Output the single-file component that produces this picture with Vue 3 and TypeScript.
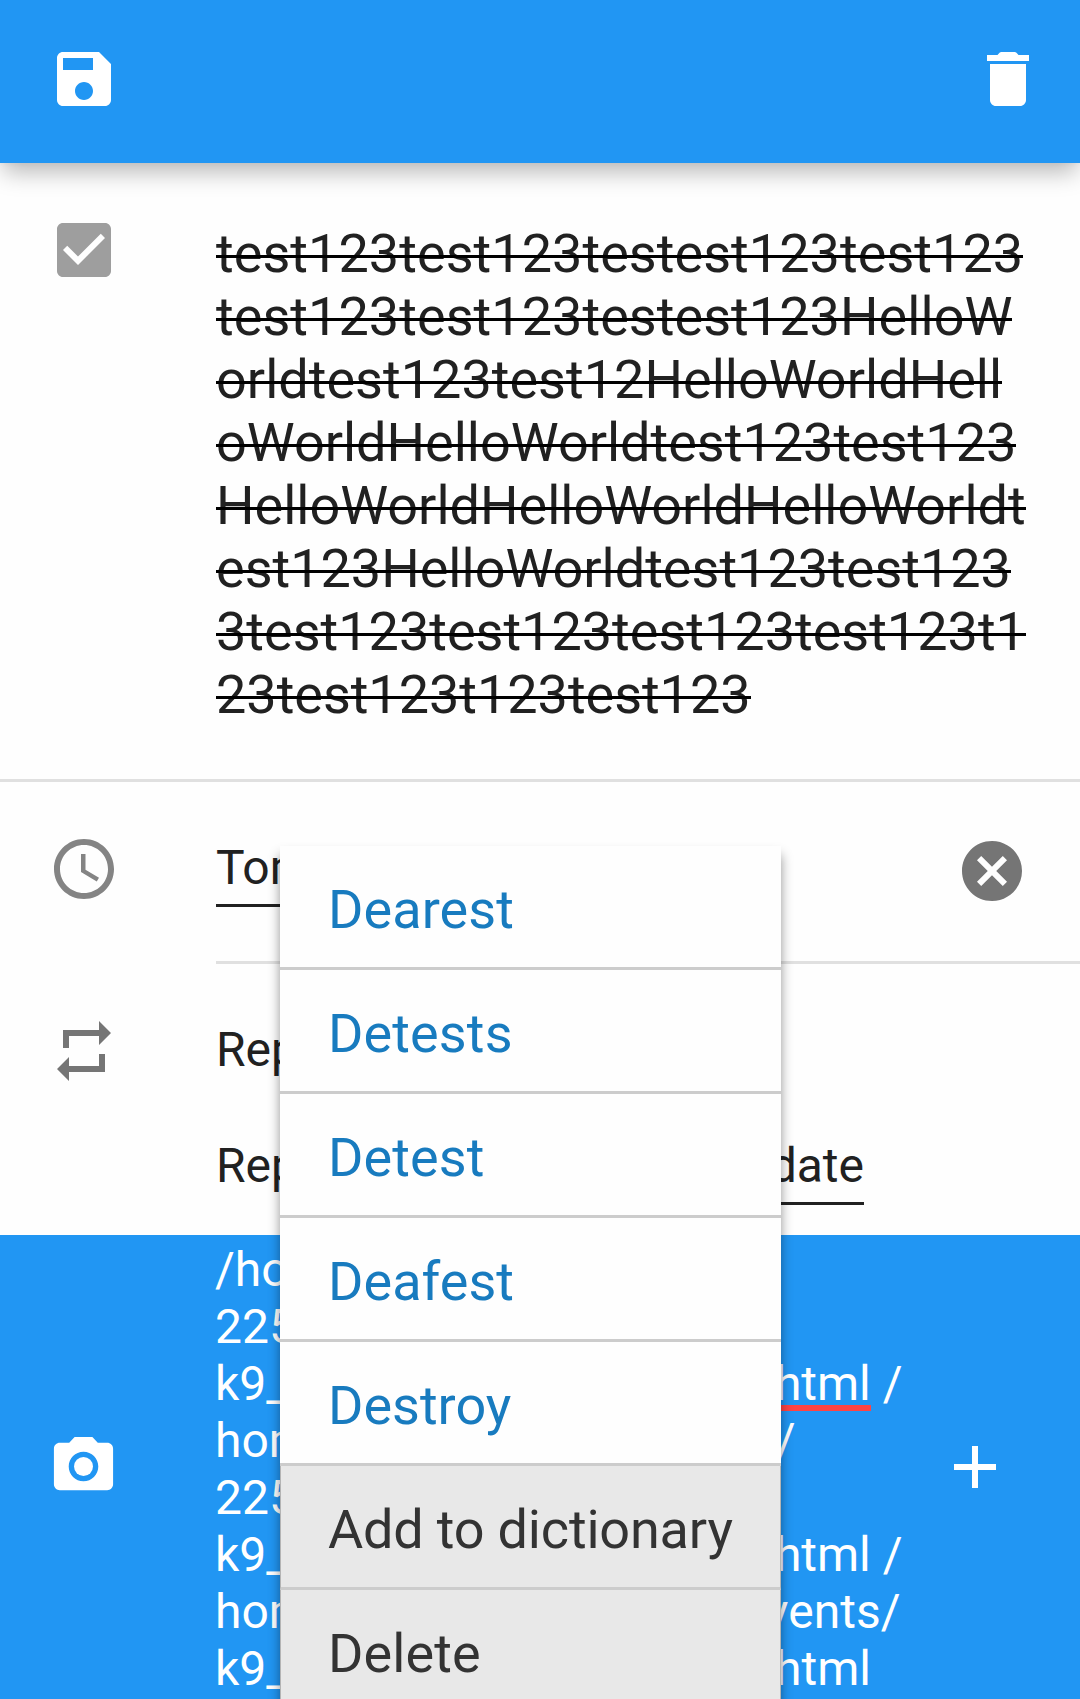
<script setup lang="ts">
interface Label {
  text: string
  spacing?: number
}

interface NoteLine {
  start: string
  end?: string
  width?: number
  misspelled?: boolean
  tail?: string
}

const titleLines: Label[] = [
  { text: 'test123test123testest123test123', spacing: 0.05 },
  { text: 'test123test123testest123HelloW', spacing: 0.05 },
  { text: 'orldtest123test12HelloWorldHell', spacing: 0.02 },
  { text: 'oWorldHelloWorldtest123test123' },
  { text: 'HelloWorldHelloWorldHelloWorldt' },
  { text: 'est123HelloWorldtest123test123' },
  { text: '3test123test123test123test123t1' },
  { text: '23test123t123test123', spacing: -0.03 },
]

const noteLines: NoteLine[] = [
  { start: '/ho' },
  { start: '225' },
  { start: 'k9_', end: 'html', tail: ' /', width: 687.5, misspelled: true },
  { start: 'hom', end: '/', width: 580.5 },
  { start: '225' },
  { start: 'k9_', end: 'html', tail: ' /', width: 687.5 },
  { start: 'hom', end: 'vents/', width: 685.5 },
  { start: 'k9_', end: 'html', width: 656 },
]

const suggestions: Label[] = [
  { text: 'Dearest', spacing: 0.08 },
  { text: 'Detests', spacing: 0.12 },
  { text: 'Detest', spacing: 0.12 },
  { text: 'Deafest', spacing: 0.04 },
  { text: 'Destroy' },
]
const actions: Label[] = [{ text: 'Add to dictionary', spacing: -0.18 }, { text: 'Delete', spacing: 0.08 }]

const tracking = (label: Label) => ({ letterSpacing: `${label.spacing ?? 0}px` })
</script>

<template>
  <main class="screen">
    <header class="toolbar">
      <svg class="icon" viewBox="0 0 24 24"><path d="M17 3H5c-1.11 0-2 .9-2 2v14c0 1.1.89 2 2 2h14c1.1 0 2-.9 2-2V7l-4-4zm-5 16c-1.66 0-3-1.34-3-3s1.34-3 3-3 3 1.34 3 3-1.34 3-3 3zm3-10H5V5h10v4z" /></svg>
      <svg class="icon" viewBox="0 0 24 24"><path d="M6 19c0 1.1.9 2 2 2h8c1.1 0 2-.9 2-2V7H6v12zM19 4h-3.5l-.6-.65c-.25-.25-.5-.35-.85-.35h-4.1c-.35 0-.6.1-.85.35L8.5 4H5v2h14V4z" /></svg>
    </header>

    <section class="row task">
      <svg class="icon check" viewBox="0 0 24 24"><path d="M19 3H5c-1.11 0-2 .9-2 2v14c0 1.1.89 2 2 2h14c1.11 0 2-.9 2-2V5c0-1.1-.89-2-2-2zm-9 14l-5-5 1.41-1.41L10 14.17l7.59-7.59L19 8l-9 9z" /></svg>
      <div class="title">
        <div v-for="line in titleLines" :key="line.text"><span class="struck" :style="tracking(line)">{{ line.text }}</span></div>
      </div>
    </section>

    <section class="row due">
      <svg class="icon clock" viewBox="0 0 24 24"><path d="M11.99 2C6.47 2 2 6.48 2 12s4.47 10 9.99 10C17.52 22 22 17.52 22 12S17.52 2 11.99 2zM12 20c-4.42 0-8-3.58-8-8s3.58-8 8-8 8 3.58 8 8-3.58 8-8 8zm.5-13H11v6l5.25 3.15.75-1.23-4.5-2.67z" /></svg>
      <div class="due-body">
        <span class="field">Tom</span>
        <svg class="icon clear" viewBox="0 0 24 24"><path d="M12 2C6.47 2 2 6.47 2 12s4.47 10 10 10 10-4.47 10-10S17.53 2 12 2zm5 13.59L15.59 17 12 13.41 8.41 17 7 15.59 10.59 12 7 8.41 8.41 7 12 10.59 15.59 7 17 8.41 13.41 12 17 15.59z" /></svg>
      </div>
    </section>

    <section class="row repeat">
      <svg class="icon loop" viewBox="0 0 24 24"><path d="M7 7h10v3l4-4-4-4v3H5v6h2V7zm10 10H7v-3l-4 4 4 4v-3h12v-6h-2v4z" /></svg>
      <div class="repeat-body">
        <div>Rep</div>
        <div class="repeat-from"><span>Rep</span><span class="field">date</span></div>
      </div>
    </section>

    <section class="row notes">
      <svg class="icon camera" viewBox="0 0 24 24"><circle cx="12" cy="12" r="3.2" /><path d="M9 2L7.17 4H4c-1.1 0-2 .9-2 2v12c0 1.1.9 2 2 2h16c1.1 0 2-.9 2-2V6c0-1.1-.9-2-2-2h-3.17L15 2H9zm3 15c-2.76 0-5-2.24-5-5s2.24-5 5-5 5 2.24 5 5-2.24 5-5 5z" /></svg>
      <div class="note-text">
        <div
          v-for="(line, i) in noteLines"
          :key="i"
          class="note-line"
          :style="line.width ? { width: line.width + 'px' } : undefined"
        >
          <span>{{ line.start }}</span>
          <span v-if="line.end" class="note-end"><span :class="{ misspelled: line.misspelled }">{{ line.end }}</span>{{ line.tail }}</span>
        </div>
      </div>
      <svg class="icon plus" viewBox="0 0 24 24"><path d="M19 13h-6v6h-2v-6H5v-2h6V5h2v6h6v2z" /></svg>
    </section>

    <div class="popup">
      <div v-for="word in suggestions" :key="word.text" class="option" :style="tracking(word)">{{ word.text }}</div>
      <div v-for="action in actions" :key="action.text" class="option action" :style="tracking(action)">{{ action.text }}</div>
    </div>
  </main>
</template>

<style>
body {
  margin: 0;
  background: #fefefe;
}
</style>

<style scoped>
.screen {
  position: relative;
  display: flex;
  flex-direction: column;
  width: 1080px;
  height: 1699px;
  overflow: hidden;
  background: #fefefe;
  color: #212121;
  font-family: Roboto, sans-serif;
  font-size: 48px;
  line-height: 57px;
}
.icon {
  display: block;
  flex: none;
  width: 72px;
  height: 72px;
  fill: #757575;
}
.toolbar {
  position: relative;
  z-index: 1;
  display: flex;
  justify-content: space-between;
  flex: none;
  box-sizing: border-box;
  height: 163px;
  padding: 43px 36px 0 48px;
  background: #2196f3;
  box-shadow: 0 12px 22px -3px rgba(0, 0, 0, 0.28), 0 0 6px rgba(0, 0, 0, 0.04);
}
.toolbar .icon {
  fill: #fff;
}
.row {
  display: flex;
  flex: none;
  box-sizing: border-box;
  padding-left: 48px;
}
.task {
  height: 619px;
  border-bottom: 3px solid #e0e0e0;
}
.check {
  margin-top: 51px;
  fill: #9e9e9e;
}
.title {
  margin: 59px 0 0 96px;
  font-size: 54px;
  line-height: 63px;
  white-space: nowrap;
}
.struck {
  position: relative;
  display: inline-block;
}
/* strike bar drawn over the glyphs */
.struck::after {
  content: '';
  position: absolute;
  top: 33px;
  right: 0;
  left: 0;
  height: 3px;
  background: #000;
}
.title > div {
  height: 63px;
}
.due {
  height: 182px;
}
.clock {
  margin-top: 51px;
  fill: #848484;
}
.due-body {
  display: flex;
  flex: 1;
  justify-content: space-between;
  align-items: flex-start;
  margin-left: 96px;
  padding: 53px 52px 0 0;
  border-bottom: 3px solid #e0e0e0;
}
.due-body .field {
  margin-top: 4px;
}
.field {
  padding-bottom: 8px;
  border-bottom: 3px solid #212121;
}
.repeat {
  height: 271px;
}
.loop {
  margin-top: 51px;
}
.repeat-body {
  display: flex;
  flex-direction: column;
  gap: 59px;
  margin: 57px 0 0 96px;
}
.repeat-from {
  display: flex;
  justify-content: space-between;
  width: 648px;
}
.repeat-from .field {
  padding-left: 60px;
}
.notes {
  flex: 1;
  background: #2196f3;
  color: #fff;
}
.notes .icon {
  margin-top: 196px;
  fill: #fff;
}
.notes .camera {
  width: 71px;
  height: 71px;
}
.note-text {
  flex: none;
  width: 724px;
  margin: 6px 0 0 96px;
}
.note-line {
  display: flex;
  justify-content: space-between;
  height: 57px;
}
.note-end {
  white-space: pre;
}
.misspelled {
  background: linear-gradient(to top, transparent 1px, #ff4444 1px, #ff4444 7px, transparent 7px);
}
.popup {
  position: absolute;
  z-index: 2;
  top: 846px;
  left: 280px;
  width: 501px;
  background: #fefefe;
  box-shadow: 0 9px 11px rgba(0, 0, 0, 0.42);
  font-size: 54px;
  line-height: 63px;
}
.option {
  box-sizing: border-box;
  height: 124px;
  padding: 32px 48px 0;
  border-bottom: 3px solid #ccc;
  color: #187bbf;
  white-space: nowrap;
}
.option.action {
  padding: 32px 47px 0;
  border-right: 1px solid #b4b4b4;
  border-left: 1px solid #b4b4b4;
  background: #e8e8e8;
  color: #333;
}
</style>
